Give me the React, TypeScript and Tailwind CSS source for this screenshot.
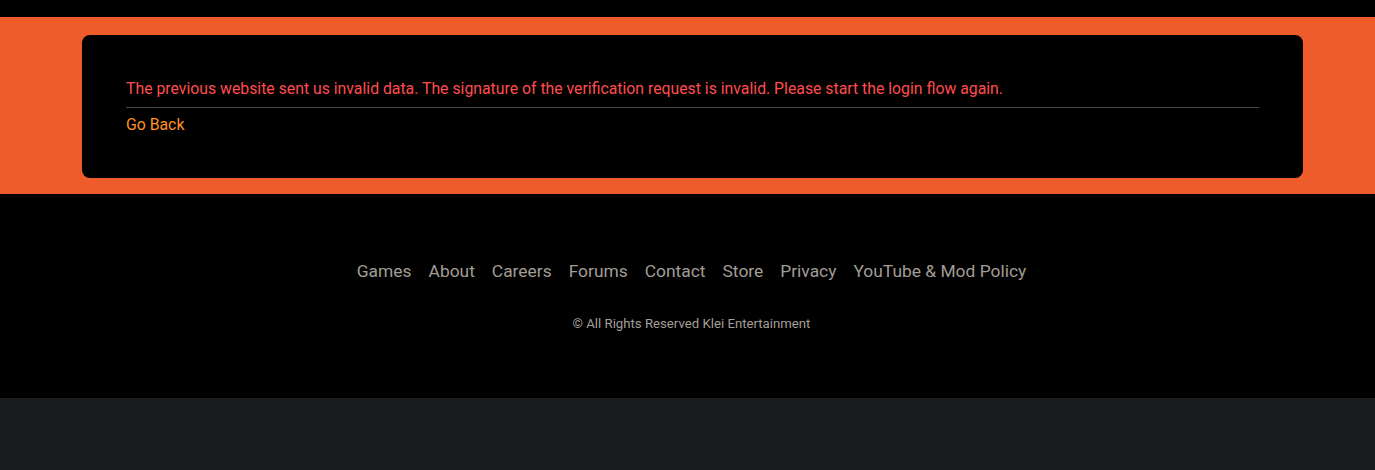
import React from "react";

const footerLinks = [
  "Games",
  "About",
  "Careers",
  "Forums",
  "Contact",
  "Store",
  "Privacy",
  "YouTube & Mod Policy",
];

export default function App() {
  return (
    <div className="min-h-screen bg-[#1b1c1e] font-['Roboto',sans-serif]">
      {/* top strip */}
      <div className="h-[17px] bg-black" />

      {/* error panel */}
      <div className="bg-[#ee5c2c] pt-[18px] pb-[16px] pl-[82px] pr-[72px]">
        <div className="rounded-lg bg-black px-[44px] pt-[42px] pb-[41px]">
          <p className="text-[15.8px] leading-6 text-[#ff4d4d]">
            The previous website sent us invalid data. The signature of the
            verification request is invalid. Please start the login flow again.
          </p>
          <div className="mt-[6px] border-t border-[#444]" />
          <a href="#" className="mt-[5px] block text-[15.8px] leading-6 text-[#ff9220]">
            Go Back
          </a>
        </div>
      </div>

      {/* footer */}
      <footer className="h-[204px] bg-black pt-[64px] pl-[80px] pr-[72px]">
        <nav className="flex justify-center gap-[17px] text-[17.4px] leading-[27px] text-[#a29d95]">
          {footerLinks.map((link) => (
            <a key={link} href="#">
              {link}
            </a>
          ))}
        </nav>
        <p className="mt-[30px] text-center text-[13.2px] leading-[18px] text-[#a39f98]">
          © All Rights Reserved Klei Entertainment
        </p>
      </footer>
    </div>
  );
}
